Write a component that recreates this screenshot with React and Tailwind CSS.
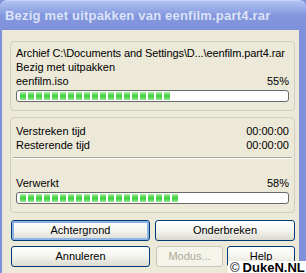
import React from 'react';

const ui = { fontFamily: '"Liberation Sans", Arial, sans-serif' };

function Progress({ chunks }) {
  return (
    <div className="h-[12px] rounded-[3px] border border-[#686868] bg-white flex items-center gap-[2px] px-[3px] overflow-hidden">
      {Array.from({ length: chunks }).map((_, i) => (
        <div
          key={i}
          className="w-[6px] h-[8px] shrink-0 bg-gradient-to-b from-[#a8eea8] via-[#2fd12f] to-[#8fe48f]"
        />
      ))}
    </div>
  );
}

function Row({ left, right }) {
  return (
    <div className="flex justify-between leading-[14px]">
      <span>{left}</span>
      <span>{right}</span>
    </div>
  );
}

function XpButton({ children, focused, disabled, className }) {
  let cls = 'h-[21px] rounded-[3px] border text-[11px] flex items-center justify-center ';
  if (disabled) {
    cls += 'border-[#c9c7ba] bg-[#f5f4ea] text-[#aca899] ';
  } else {
    cls += 'border-[#003c74] bg-gradient-to-b from-[#ffffff] via-[#f4f4ef] to-[#dcdad0] text-black ';
  }
  if (focused) cls += 'shadow-[inset_0_0_0_2px_#8eb1e8] ';
  return <div className={cls + className}>{children}</div>;
}

export default function App() {
  return (
    <div className="relative w-[306px] h-[273px] overflow-hidden bg-[#7f91db] flex flex-col" style={ui}>
      {/* title bar */}
      <div className="h-[30px] shrink-0 rounded-t-[7px] bg-gradient-to-b from-[#b1c3f2] via-[#8497de] to-[#7d90da] border-t border-[#c6d3f6] flex items-center pl-[5px]">
        <span className="text-[13px] font-bold text-[#dbe3f8] tracking-[0.2px]">
          Bezig met uitpakken van eenfilm.part4.rar
        </span>
      </div>

      {/* body */}
      <div className="flex-1 ml-[2px] mr-[7px] bg-[#ece9d8] pl-[8px] pr-[4px] pt-[11px] text-[11px] text-black">
        <div className="rounded-[4px] border border-[#d0d0bf] px-[5px] pt-[4px] pb-[8px]">
          <div className="leading-[14px] whitespace-nowrap tracking-[-0.1px]">Archief C:\Documents and Settings\D...\eenfilm.part4.rar</div>
          <div className="leading-[14px]">Bezig met uitpakken</div>
          <Row left="eenfilm.iso" right="55%" />
          <div className="mt-[2px]">
            <Progress chunks={19} />
          </div>
        </div>

        <div className="mt-[6px] rounded-[4px] border border-[#d0d0bf] px-[5px] pt-[6px] pb-[8px]">
          <Row left="Verstreken tijd" right="00:00:00" />
          <Row left="Resterende tijd" right="00:00:00" />
          <div className="-mx-[3px] mt-[5px] border-t border-[#aca899] border-b border-b-white" />
          <div className="mt-[17px]">
            <Row left="Verwerkt" right="58%" />
          </div>
          <div className="mt-[2px]">
            <Progress chunks={20} />
          </div>
        </div>

        <div className="mt-[7px] flex gap-[5px] pl-[1px]">
          <XpButton focused className="w-[139px]">Achtergrond</XpButton>
          <XpButton className="w-[140px]">Onderbreken</XpButton>
        </div>
        <div className="mt-[5px] flex pl-[1px]">
          <XpButton className="w-[139px]">Annuleren</XpButton>
          <XpButton disabled className="w-[67px] ml-[6px]">Modus...</XpButton>
          <XpButton className="w-[68px] ml-[4px]">Help</XpButton>
        </div>
      </div>

      {/* watermark */}
      <div className="absolute right-0 bottom-0 w-[78px] h-[12px] bg-white flex items-center pl-[2px] text-[13px] font-bold text-black leading-none">
        <span className="font-normal">©</span>
        <span className="ml-[3px]">DukeN.NL</span>
      </div>
    </div>
  );
}
